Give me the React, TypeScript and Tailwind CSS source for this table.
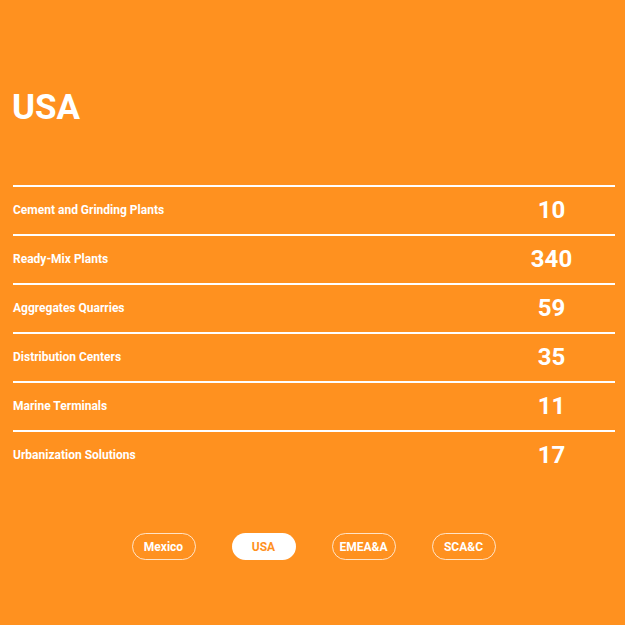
import React from "react";

const rows = [
  { label: "Cement and Grinding Plants", value: "10" },
  { label: "Ready-Mix Plants", value: "340" },
  { label: "Aggregates Quarries", value: "59" },
  { label: "Distribution Centers", value: "35" },
  { label: "Marine Terminals", value: "11" },
  { label: "Urbanization Solutions", value: "17" },
];

const tabs = ["Mexico", "USA", "EMEA&A", "SCA&C"];

export default function App() {
  return (
    <div
      className="w-[625px] h-[625px] bg-[#ff911f] text-white overflow-hidden"
      style={{ fontFamily: "Roboto, 'Liberation Sans', sans-serif" }}
    >
      <div className="pt-[89px] pl-[12px]">
        <h1 className="text-[35px] leading-[38px] font-bold">USA</h1>
      </div>
      <div className="mt-[58px] ml-[13px] w-[602px]">
        {rows.map((r) => (
          <div key={r.label} className="flex items-center h-[49px] pb-[2px] border-t-2 border-white">
            <div className="flex-1 text-[12px] font-bold leading-none">{r.label}</div>
            <div className="w-[127px] text-center text-[24px] font-bold leading-none">{r.value}</div>
          </div>
        ))}
      </div>
      <div className="mt-[54px] flex justify-center gap-[36px] pl-[2px]">
        {tabs.map((t) => (
          <div
            key={t}
            className={`w-[64px] h-[27px] rounded-full border border-white/75 flex items-center justify-center text-[12px] font-bold ${
              t === "USA" ? "bg-white text-[#ff911f]" : "text-white"
            }`}
          >
            {t}
          </div>
        ))}
      </div>
    </div>
  );
}
